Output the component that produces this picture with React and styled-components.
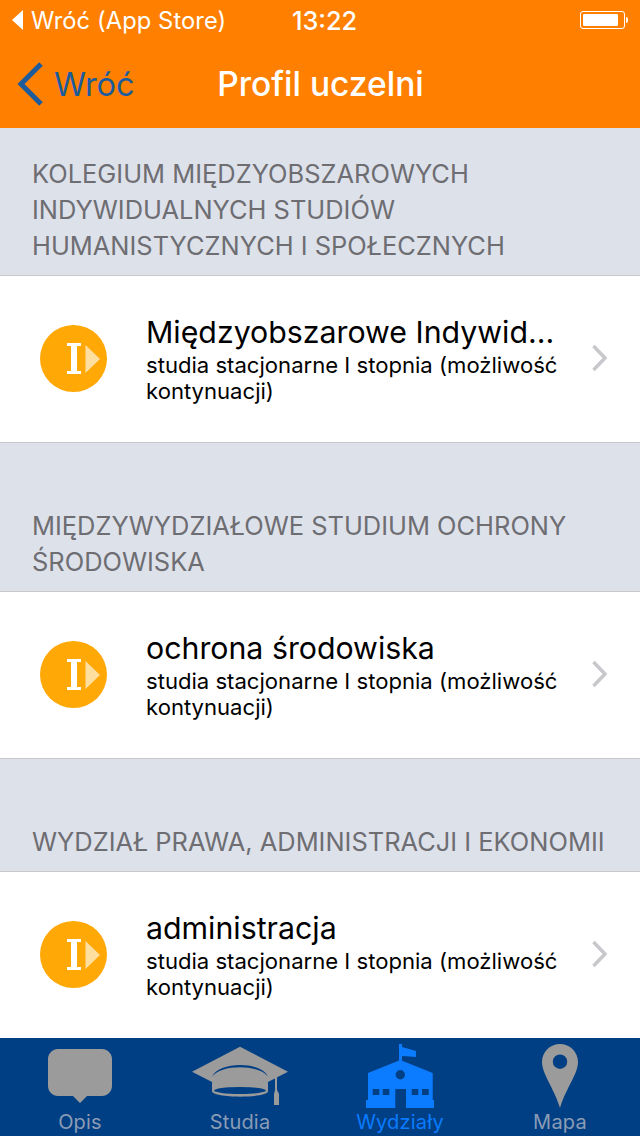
import React from "react";
import styled, { createGlobalStyle } from "styled-components";

const GlobalStyle = createGlobalStyle`
  html, body {
    margin: 0;
    padding: 0;
    background: #fff;
  }
  body {
    font-family: Inter, "Liberation Sans", sans-serif;
  }
`;

const sections = [
  {
    id: 1,
    lines: [
      "KOLEGIUM MIĘDZYOBSZAROWYCH",
      "INDYWIDUALNYCH STUDIÓW",
      "HUMANISTYCZNYCH I SPOŁECZNYCH",
    ],
    height: 147,
    title: "Międzyobszarowe Indywid...",
  },
  {
    id: 2,
    lines: ["MIĘDZYWYDZIAŁOWE STUDIUM OCHRONY", "ŚRODOWISKA"],
    height: 148,
    title: "ochrona środowiska",
  },
  {
    id: 3,
    lines: ["WYDZIAŁ PRAWA, ADMINISTRACJI I EKONOMII"],
    height: 112,
    title: "administracja",
  },
];

const tabs = [
  { id: "opis", label: "Opis", icon: <BubbleIcon /> },
  { id: "studia", label: "Studia", icon: <CapIcon /> },
  { id: "wydzialy", label: "Wydziały", icon: <SchoolIcon />, active: true },
  { id: "mapa", label: "Mapa", icon: <PinIcon /> },
];

function BubbleIcon() {
  return (
    <svg width="64" height="54" viewBox="0 0 64 54">
      <path
        d="M10 0H54C59.500 0 64 4.500 64 10V37C64 42.500 59.500 47 54 47H39L32 54L25 47H10C4.500 47 0 42.500 0 37V10C0 4.500 4.500 0 10 0Z"
        fill="#9b9b9b"
      />
    </svg>
  );
}

function CapIcon() {
  return (
    <svg width="96" height="60" viewBox="0 0 96 60">
      <path d="M48 0.700L96 25.700L76 36H20L0 25.700Z" fill="#9b9b9b" />
      <path d="M20 34H76V45C76 52.500 20 52.500 20 45Z" fill="#9b9b9b" />
      <path d="M20 31C26 15 70 15 76 31C68 18 28 18 20 31Z" fill="#003f84" />
      <ellipse cx="48" cy="44.500" rx="26" ry="3.500" fill="#003f84" />
      <path d="M83 31H85V44L87 48V59H82V48L83 44Z" fill="#9b9b9b" />
    </svg>
  );
}

function SchoolIcon() {
  return (
    <svg width="68" height="64" viewBox="0 0 68 64">
      <path d="M33 0H36V3L50 7V13L36 12V18H33Z" fill="#0b7bff" />
      <path
        d="M34.300 16L66.700 29V56H68V64H40V45H29.300V64H0V56H2V29ZM34.300 26A4.700 4.700 0 1 0 34.300 35.400A4.700 4.700 0 1 0 34.300 26Z"
        fill="#0b7bff"
        fillRule="evenodd"
      />
      <path
        d="M6.700 45H13.300V51H6.700ZM16.700 45H23.300V51H16.700ZM45.700 45H52.300V51H45.700ZM56 45H62.700V51H56Z"
        fill="#003f84"
      />
    </svg>
  );
}

function PinIcon() {
  return (
    <svg width="36" height="64" viewBox="0 0 36 64">
      <path
        d="M18 0C28 0 36 8 36 18C36 30 24 44 18 64C12 44 0 30 0 18C0 8 8 0 18 0ZM18 10.500A7.200 7.200 0 1 0 18 24.900A7.200 7.200 0 1 0 18 10.500Z"
        fill="#9b9b9b"
        fillRule="evenodd"
      />
    </svg>
  );
}

const Page = styled.div`
  width: 640px;
  height: 1136px;
  display: flex;
  flex-direction: column;
  overflow: hidden;
  background: #fff;
`;

const Header = styled.header`
  height: 128px;
  flex: none;
  background: #ff8000;
  color: #fff;
`;

const StatusBar = styled.div`
  height: 40px;
  display: grid;
  grid-template-columns: 1fr auto 1fr;
  align-items: center;
  padding: 0 12px;
`;

const StatusBack = styled.div`
  display: flex;
  align-items: center;
  gap: 8px;
  font-size: 23.7px;
  letter-spacing: 0.1px;
`;

const BackTriangle = styled.span`
  width: 0;
  height: 0;
  border-top: 10px solid transparent;
  border-bottom: 10px solid transparent;
  border-right: 11px solid #fff;
`;

const StatusTime = styled.div`
  font-size: 25.3px;
  font-weight: 500;
  margin-left: 9px;
`;

const Battery = styled.div`
  justify-self: end;
  display: flex;
  align-items: center;
  gap: 1px;
`;

const BatteryBody = styled.div`
  width: 45px;
  height: 18px;
  box-sizing: border-box;
  border: 1px solid #fff;
  border-radius: 3px;
  padding: 2px;

  &::before {
    content: "";
    display: block;
    height: 100%;
    width: 90%;
    background: #fff;
    border-radius: 1px;
  }
`;

const BatteryCap = styled.div`
  width: 2px;
  height: 6px;
  background: #fff;
  border-radius: 0 2px 2px 0;
`;

const NavBar = styled.nav`
  height: 88px;
  display: grid;
  grid-template-columns: 1fr auto 1fr;
  align-items: center;
  padding: 0 16px 0 17px;
`;

const BackButton = styled.div`
  display: flex;
  align-items: center;
  gap: 10px;
  color: #1d5c9c;
  font-size: 32.5px;
`;

const NavTitle = styled.h1`
  margin: 0;
  font-size: 33.5px;
  font-weight: 500;
  color: #fff;
`;

const List = styled.main`
  flex: 1;
  min-height: 0;
  display: flex;
  flex-direction: column;
`;

const SectionHead = styled.div`
  height: ${(p) => p.$height}px;
  flex: none;
  box-sizing: border-box;
  display: flex;
  flex-direction: column;
  justify-content: flex-end;
  padding: 0 32px 11px;
  background: #dde1ea;
  color: #6d6d72;
  font-size: 25.45px;
  line-height: 36px;
  white-space: nowrap;
`;

const Row = styled.div`
  height: 166px;
  flex: none;
  box-sizing: content-box;
  display: flex;
  align-items: center;
  padding: 0 32px 0 40px;
  background: #fff;
  border-top: 1px solid #c8c7cc;
  border-bottom: 1px solid #c8c7cc;
`;

const LastRow = styled(Row)`
  border-bottom: 0;
`;

const Badge = styled.div`
  flex: none;
  width: 67px;
  height: 67px;
  margin-bottom: 2px;
  border-radius: 50%;
  background: #ffa806;
  display: flex;
  align-items: center;
  padding-left: 27px;
  box-sizing: border-box;
`;

const RowText = styled.div`
  flex: 1;
  min-width: 0;
  margin-left: 39px;
  color: #000;
`;

const RowTitle = styled.div`
  font-size: 30.3px;
  line-height: 35px;
  margin-bottom: 2px;
  white-space: nowrap;
`;

const RowSub = styled.div`
  font-size: 22.1px;
  line-height: 26px;
  width: 420px;
`;

const ChevronIcon = styled.svg`
  flex: none;
  margin-bottom: 2px;
`;

const TabBar = styled.footer`
  height: 98px;
  flex: none;
  background: #003f84;
  display: grid;
  grid-template-columns: repeat(4, 1fr);
`;

const Tab = styled.div`
  display: flex;
  flex-direction: column;
  align-items: center;
  justify-content: flex-end;
  padding-bottom: 2px;
  color: ${(p) => (p.$active ? "#0b7bff" : "#8b9cb5")};
  font-size: 20px;
  letter-spacing: 0.2px;
  line-height: 24px;
`;

const TabIcon = styled.div`
  height: 68px;
  display: flex;
  align-items: center;
  justify-content: center;
`;

const RowBadge = () => (
  <Badge>
    <svg width="33" height="31" viewBox="0 0 33 31">
      <path
        d="M0 0H14V3H10V28H14V31H0V28H4V3H0Z"
        fill="#fff"
      />
      <path d="M18.500 2L33 16L18.500 30Z" fill="#ffdfa0" />
    </svg>
  </Badge>
);

const Chevron = () => (
  <ChevronIcon width="18" height="28" viewBox="0 0 18 28" fill="none">
    <path d="M3.500 2L15 14L3.500 26" stroke="#c7c7cc" strokeWidth="3.500" />
  </ChevronIcon>
);

export default function App() {
  return (
    <Page>
      <GlobalStyle />
      <Header>
        <StatusBar>
          <StatusBack>
            <BackTriangle />
            Wróć (App Store)
          </StatusBack>
          <StatusTime>13:22</StatusTime>
          <Battery>
            <BatteryBody />
            <BatteryCap />
          </Battery>
        </StatusBar>
        <NavBar>
          <BackButton>
            <svg width="27" height="44" viewBox="0 0 27 44" fill="none">
              <path d="M24 2L4 22L24 42" stroke="#1d5c9c" strokeWidth="5" />
            </svg>
            Wróć
          </BackButton>
          <NavTitle>Profil uczelni</NavTitle>
        </NavBar>
      </Header>
      <List>
        {sections.map((section, i) => {
          const RowKind = i === sections.length - 1 ? LastRow : Row;
          return (
            <React.Fragment key={section.id}>
              <SectionHead $height={section.height}>
                {section.lines.map((line) => (
                  <div key={line}>{line}</div>
                ))}
              </SectionHead>
              <RowKind>
                <RowBadge />
                <RowText>
                  <RowTitle>{section.title}</RowTitle>
                  <RowSub>studia stacjonarne I stopnia (możliwość kontynuacji)</RowSub>
                </RowText>
                <Chevron />
              </RowKind>
            </React.Fragment>
          );
        })}
      </List>
      <TabBar>
        {tabs.map((tab) => (
          <Tab key={tab.id} $active={tab.active}>
            <TabIcon>{tab.icon}</TabIcon>
            {tab.label}
          </Tab>
        ))}
      </TabBar>
    </Page>
  );
}
